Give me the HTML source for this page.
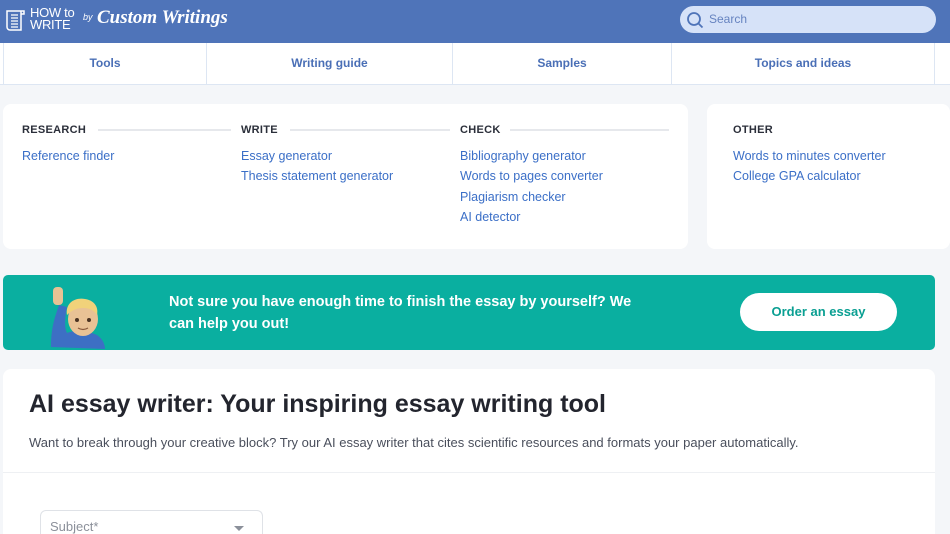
<!DOCTYPE html>
<html><head><meta charset="utf-8"><style>
*{box-sizing:border-box;margin:0;padding:0}
html,body{width:950px;height:534px;overflow:hidden}
body{background:#f4f6f9;font-family:"Liberation Sans",sans-serif;position:relative}
.hdr{position:absolute;left:0;top:0;width:950px;height:43px;background:#4f74b9}
.nav{position:absolute;top:43px;left:0;width:950px;height:42px;background:#fff;border-bottom:1px solid #dde6f3}
.nav div{position:absolute;top:0;height:42px;line-height:41px;text-align:center;color:#4a6fb6;font-weight:bold;font-size:12px;border-left:1px solid #dde6f3}
.card{position:absolute;background:#fff;border-radius:8px}
.h{position:absolute;font-size:11px;font-weight:bold;color:#2b2f3a;letter-spacing:.3px}
.ln{position:absolute;height:2px;background:#e6e8ec}
.l{position:absolute;font-size:12.5px;color:#3b6fc7}
</style></head><body>
<div class="hdr">
 <svg style="position:absolute;left:4px;top:8px" width="24" height="25" viewBox="0 0 24 25"><path d="M3 3h14v19H6a3 3 0 0 1-3-3V3z M17 3h3v3h-3" fill="none" stroke="#fff" stroke-width="1.5"/><path d="M7 7h7M7 10h7M7 13h7M7 16h7M7 19h7" stroke="#fff" stroke-width="1.2"/></svg>
 <div style="position:absolute;left:30px;top:7px;color:#fff;font-size:13px;line-height:12px;letter-spacing:-.3px">HOW to<br>WRITE</div>
 <div style="position:absolute;left:83px;top:12px;color:#fff;font-size:9px;font-style:italic">by</div>
 <div style="position:absolute;left:97px;top:7px;color:#fff;font-size:19px;font-style:italic;font-weight:bold;font-family:'Liberation Serif',serif">Custom Writings</div>
 <div style="position:absolute;left:680px;top:6px;width:256px;height:27px;border-radius:14px;background:#d6e2f8"></div>
 <svg style="position:absolute;left:686px;top:11px" width="18" height="18" viewBox="0 0 18 18"><circle cx="8" cy="8" r="6" fill="none" stroke="#4f74b9" stroke-width="1.8"/><path d="M12.5 12.5l4 4" stroke="#4f74b9" stroke-width="1.8"/></svg>
 <div style="position:absolute;left:709px;top:12px;color:#6683c0;font-size:12px">Search</div>
</div>
<div class="nav">
 <div style="left:3px;width:203px">Tools</div>
 <div style="left:206px;width:246px">Writing guide</div>
 <div style="left:452px;width:219px">Samples</div>
 <div style="left:671px;width:264px;border-right:1px solid #dde6f3">Topics and ideas</div>
</div>
<div class="card" style="left:3px;top:104px;width:685px;height:145px"></div>
<div class="card" style="left:707px;top:104px;width:243px;height:145px"></div>
<div class="h" style="left:22px;top:124px">RESEARCH</div><div class="ln" style="left:98px;top:129px;width:133px"></div>
<div class="h" style="left:241px;top:124px">WRITE</div><div class="ln" style="left:290px;top:129px;width:160px"></div>
<div class="h" style="left:460px;top:124px">CHECK</div><div class="ln" style="left:510px;top:129px;width:159px"></div>
<div class="h" style="left:733px;top:124px">OTHER</div>
<div class="l" style="left:22px;top:149px">Reference finder</div>
<div class="l" style="left:241px;top:149px">Essay generator</div>
<div class="l" style="left:241px;top:169px">Thesis statement generator</div>
<div class="l" style="left:460px;top:149px">Bibliography generator</div>
<div class="l" style="left:460px;top:169px">Words to pages converter</div>
<div class="l" style="left:460px;top:190px">Plagiarism checker</div>
<div class="l" style="left:460px;top:210px">AI detector</div>
<div class="l" style="left:733px;top:149px">Words to minutes converter</div>
<div class="l" style="left:733px;top:169px">College GPA calculator</div>
<div style="position:absolute;left:3px;top:275px;width:932px;height:75px;background:#0aafa0;border-radius:5px;overflow:hidden">
 <svg style="position:absolute;left:44px;top:10px" width="60" height="65" viewBox="0 0 60 65"><path d="M4 62c0-20 4-30 8-42l8 2c-2 10-3 20 0 26 6-3 20-3 30 2 6 4 8 10 8 14z" fill="#3d6fc4"/><rect x="6" y="2" width="10" height="18" rx="4" fill="#e8c294"/><ellipse cx="36" cy="34" rx="15" ry="17" fill="#e9c295"/><path d="M20 30c-2-12 8-18 18-16 8 1 14 7 12 16-3-5-8-7-14-7s-11 2-16 7z" fill="#f1d27a"/><circle cx="30" cy="35" r="2" fill="#4a3322"/><circle cx="42" cy="35" r="2" fill="#4a3322"/><path d="M31 43q5 3 10 0" stroke="#8a5a3c" fill="none" stroke-width="1.2"/></svg>
 <div style="position:absolute;left:166px;top:16px;color:#fff;font-size:14.5px;font-weight:bold;line-height:22px;width:480px">Not sure you have enough time to finish the essay by yourself? We can help you out!</div>
 <div style="position:absolute;left:737px;top:18px;width:157px;height:38px;border-radius:19px;background:#fff;color:#0a9f92;font-weight:bold;font-size:13px;text-align:center;line-height:38px">Order an essay</div>
</div>
<div style="position:absolute;left:3px;top:369px;width:932px;height:165px;background:#fff;border-radius:8px 8px 0 0"></div>
<div style="position:absolute;left:3px;top:472px;width:932px;height:1px;background:#eef0f3"></div>
<div style="position:absolute;left:29px;top:390px;font-size:25px;font-weight:bold;color:#23252e">AI essay writer: Your inspiring essay writing tool</div>
<div style="position:absolute;left:29px;top:435px;font-size:13px;color:#4a4f5c">Want to break through your creative block? Try our AI essay writer that cites scientific resources and formats your paper automatically.</div>
<div style="position:absolute;left:40px;top:510px;width:223px;height:24px;border:1px solid #dfe2e7;border-bottom:none;border-radius:6px 6px 0 0"></div>
<div style="position:absolute;left:50px;top:519px;font-size:13px;line-height:15px;color:#8b909a">Subject*</div>
<div style="position:absolute;left:234px;top:526px;width:0;height:0;border-left:5px solid transparent;border-right:5px solid transparent;border-top:5px solid #8b909a"></div>
</body></html>
